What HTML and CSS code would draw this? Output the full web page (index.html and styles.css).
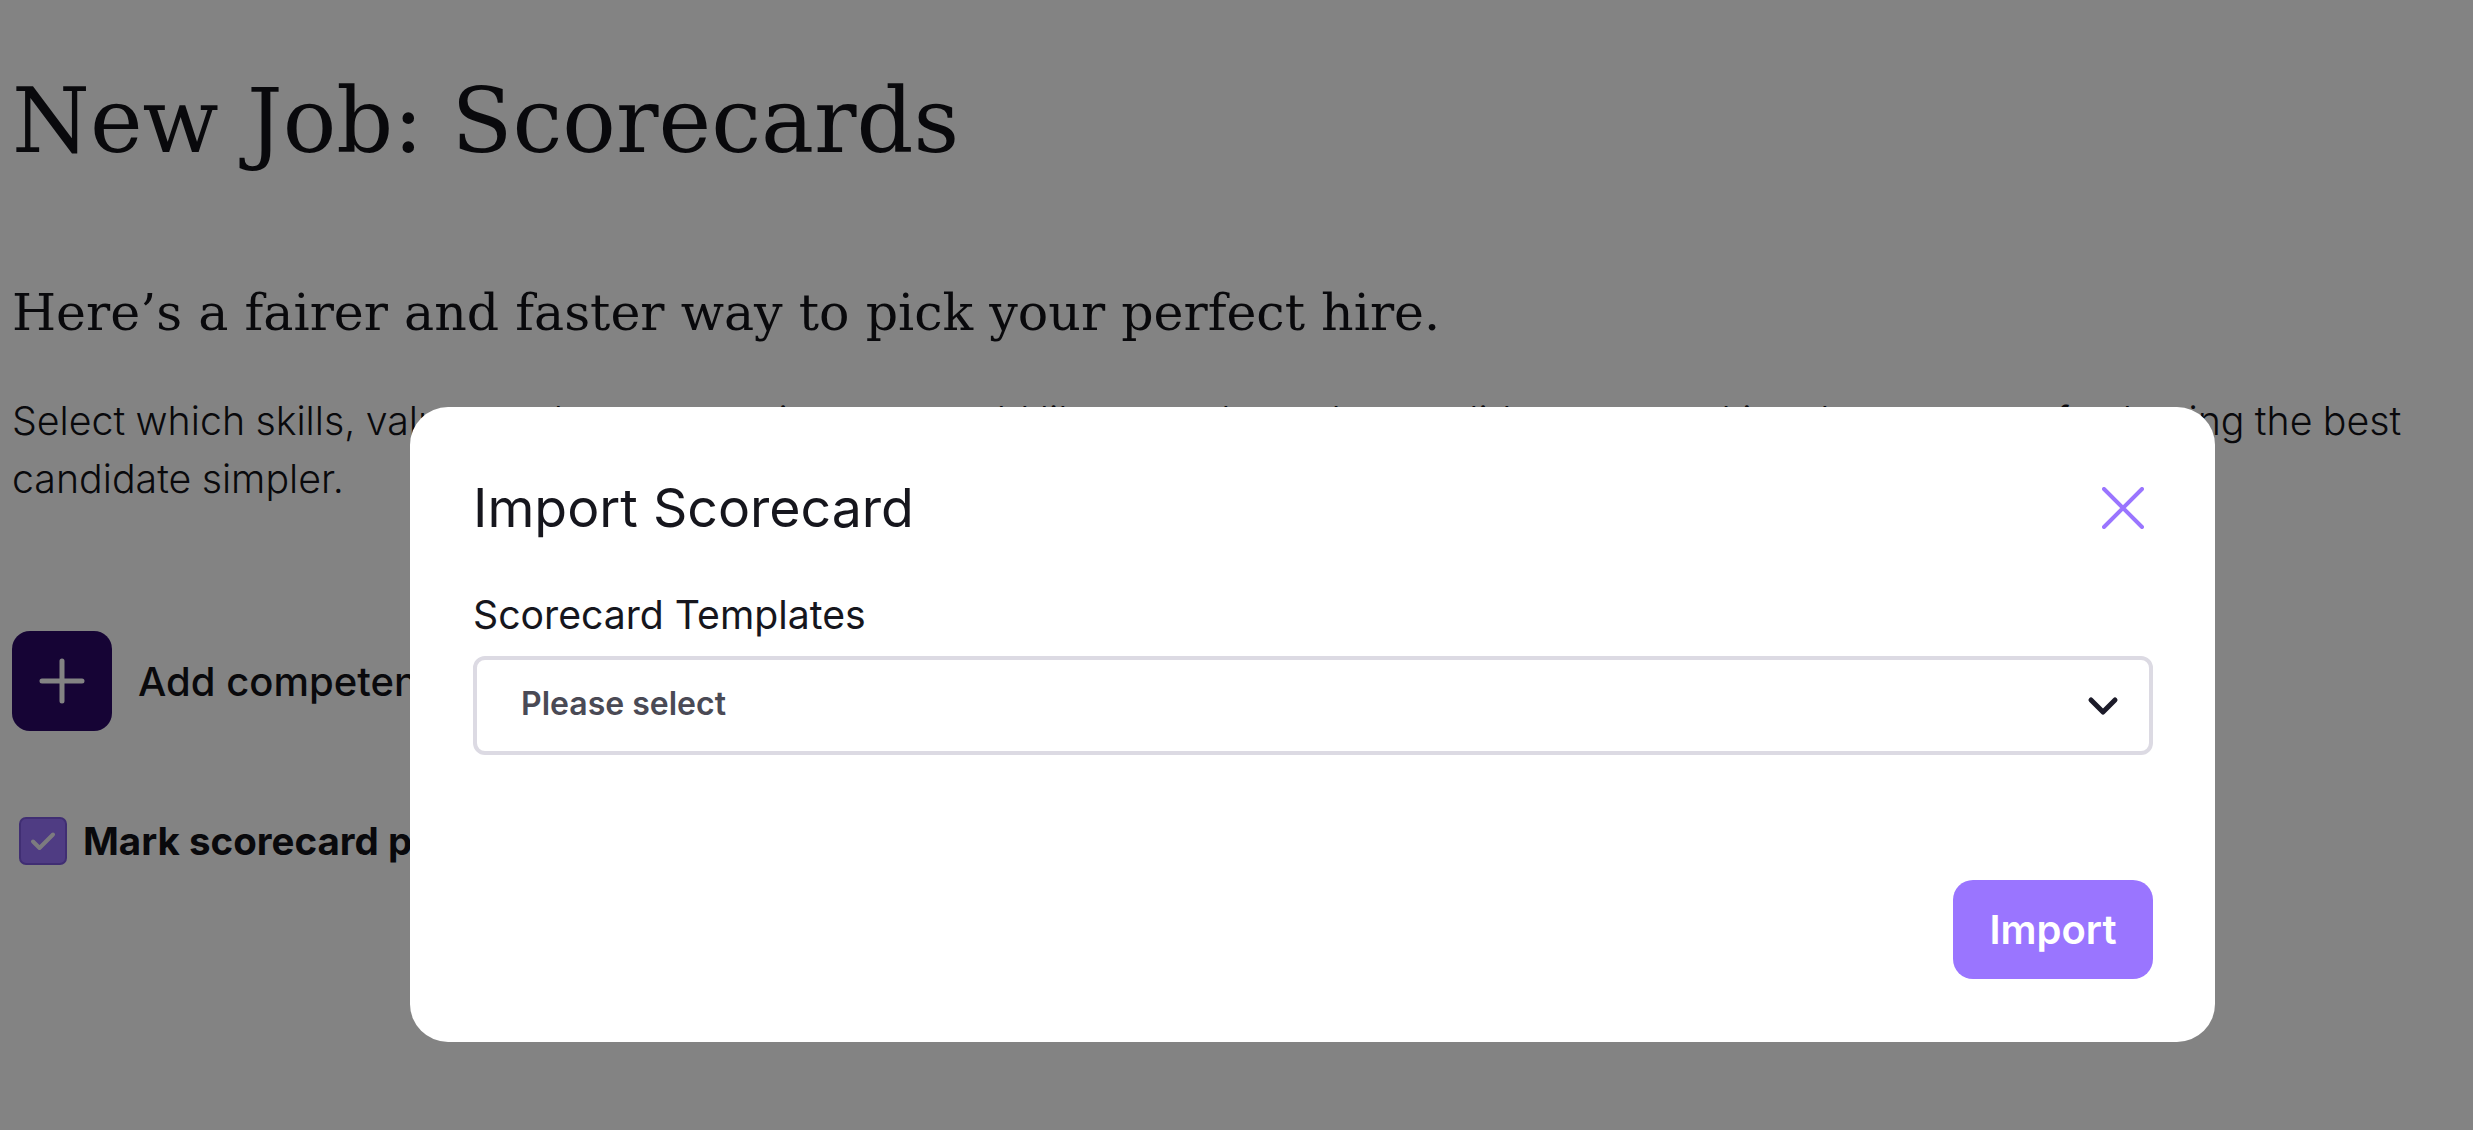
FILE: index.html
```html
<!DOCTYPE html>
<html lang="en">
<head>
<meta charset="utf-8">
<title>New Job: Scorecards</title>
<link rel="stylesheet" href="styles.css">
</head>
<body>
<main class="page">
  <h1 class="page-title">New Job: Scorecards</h1>
  <h2 class="page-subtitle">Here’s a fairer and faster way to pick your perfect hire.</h2>
  <p class="page-intro">Select which skills, values and competencies you would like to evaluate the candidates on, making the process of selecting the best candidate simpler.</p>
  <div class="add-row">
    <button class="add-btn" type="button" aria-label="Add competency">
      <svg width="46" height="46" viewBox="0 0 46 46"><path d="M23 3v40M3 23h40" stroke="#fff" stroke-width="5" stroke-linecap="round" fill="none"/></svg>
    </button>
    <span class="add-label">Add competency</span>
  </div>
  <label class="check-row">
    <span class="check-box">
      <svg width="30" height="30" viewBox="0 0 30 30"><path d="M5 15.5l6.5 6.5L25 8.5" stroke="#f2f0f8" stroke-width="4" stroke-linecap="round" stroke-linejoin="round" fill="none"/></svg>
    </span>
    <span class="check-label">Mark scorecard private</span>
  </label>
</main>

<div class="overlay">
  <section class="modal" role="dialog" aria-labelledby="modal-title">
    <header class="modal-head">
      <h3 id="modal-title" class="modal-title">Import Scorecard</h3>
      <button class="close-btn" type="button" aria-label="Close">
        <svg width="42" height="42" viewBox="0 0 42 42"><path d="M2 2l38 38M40 2L2 40" stroke="#9a75ff" stroke-width="4" stroke-linecap="round" fill="none"/></svg>
      </button>
    </header>
    <div class="field-label">Scorecard Templates</div>
    <div class="select">
      <span class="select-text">Please select</span>
      <svg class="chevron" width="32" height="20" viewBox="0 0 32 20"><path d="M4 4l12 12L28 4" stroke="#1c1b29" stroke-width="5" stroke-linecap="round" stroke-linejoin="round" fill="none"/></svg>
    </div>
    <footer class="modal-foot">
      <button class="import-btn" type="button">Import</button>
    </footer>
  </section>
</div>
</body>
</html>
```
FILE: styles.css
```css
html, body {
  margin: 0;
  padding: 0;
  background: #ffffff;
}
body {
  font-family: "Inter", "Liberation Sans", sans-serif;
  color: #111118;
  overflow: hidden;
  height: 1130px;
}
.page {
  padding: 0 12px;
}
.page-title {
  font-family: "DejaVu Serif", serif;
  font-weight: normal;
  font-size: 89px;
  line-height: normal;
  margin: 69px 0 0;
  color: #131318;
}
.page-subtitle {
  font-family: "DejaVu Serif", serif;
  font-weight: normal;
  font-size: 50.6px;
  line-height: normal;
  margin: 110px 0 0;
  color: #131318;
}
.page-intro {
  font-weight: 300;
  font-size: 39.3px;
  line-height: 58px;
  word-spacing: -0.7px;
  margin: 50px 0 0;
  color: #131318;
}
.add-row {
  display: flex;
  align-items: center;
  gap: 26px;
  margin-top: 123px;
}
.add-btn {
  width: 100px;
  height: 100px;
  border: 0;
  border-radius: 18px;
  background: #2b0968;
  display: flex;
  align-items: center;
  justify-content: center;
  padding: 0;
}
.add-label {
  font-size: 40px;
  font-weight: 500;
  color: #131318;
}
.check-row {
  display: flex;
  align-items: center;
  gap: 16px;
  margin-top: 86px;
  margin-left: 7px;
}
.check-box {
  width: 48px;
  height: 48px;
  box-sizing: border-box;
  border-radius: 7px;
  background: #9a75ff;
  border: 2px solid #7d5ae0;
  display: flex;
  align-items: center;
  justify-content: center;
}
.check-label {
  font-size: 38.5px;
  font-weight: 700;
  color: #131318;
}
.overlay {
  position: fixed;
  inset: 0;
  background: rgba(0, 0, 0, 0.486);
}
.modal {
  position: absolute;
  left: 410px;
  top: 407px;
  width: 1805px;
  height: 635px;
  box-sizing: border-box;
  background: #ffffff;
  border-radius: 38px;
  padding: 68px 62px 63px 63px;
  display: flex;
  flex-direction: column;
}
.modal-head {
  display: flex;
  align-items: center;
  justify-content: space-between;
}
.modal-title {
  margin: 0;
  font-size: 53.6px;
  font-weight: 400;
  line-height: normal;
  color: #16161d;
}
.close-btn {
  border: 0;
  background: none;
  padding: 0;
  margin-right: 9px;
  width: 42px;
  height: 42px;
}
.field-label {
  margin-top: 51px;
  font-size: 39.2px;
  line-height: normal;
  color: #16161d;
}
.select {
  margin-top: 18px;
  height: 99px;
  box-sizing: border-box;
  border: 4px solid #dcdae3;
  border-radius: 12px;
  display: flex;
  align-items: center;
  justify-content: space-between;
  padding: 0 30px 4px 44px;
}
.select-text {
  font-size: 32px;
  font-weight: 600;
  color: #4a4a55;
}
.chevron {
  margin-top: 4px;
}
.modal-foot {
  margin-top: auto;
  display: flex;
  justify-content: flex-end;
}
.import-btn {
  width: 200px;
  height: 99px;
  border: 0;
  border-radius: 20px;
  background: #9a75ff;
  color: #ffffff;
  font-family: "Inter", "Liberation Sans", sans-serif;
  font-size: 40px;
  font-weight: 600;
}
```
